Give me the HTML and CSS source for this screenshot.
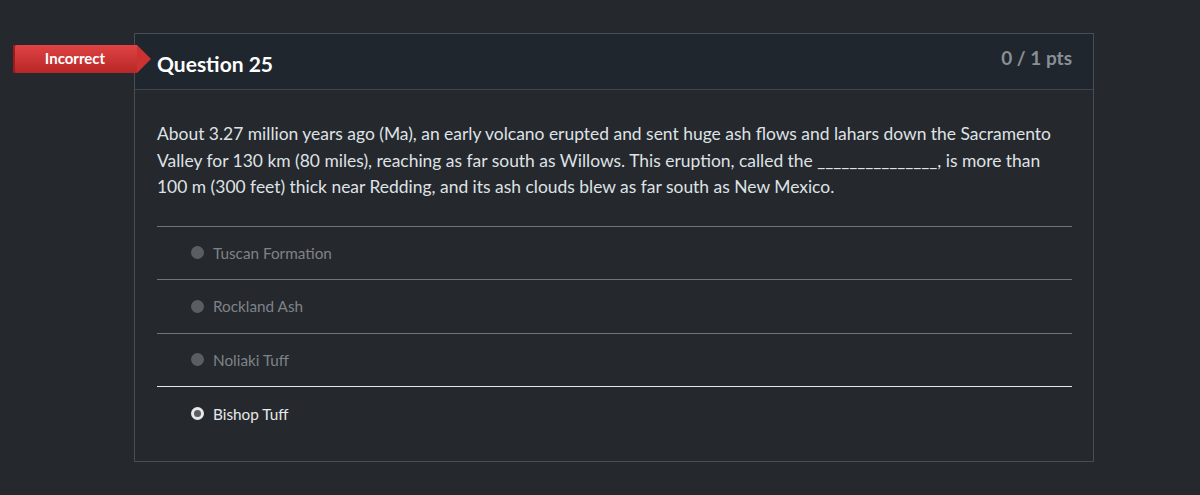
FILE: index.html
```html
<!DOCTYPE html>
<html>
<head>
<meta charset="utf-8">
<link rel="stylesheet" href="styles.css">
</head>
<body>
<div class="page">
  <div class="card">
    <div class="badge">Incorrect</div>
    <div class="header">
      <h2 class="title">Question 25</h2>
      <div class="pts">0 / 1 pts</div>
    </div>
    <div class="body">
      <p class="text">About 3.27 million years ago (Ma), an early volcano erupted and sent huge ash flows and lahars down the Sacramento Valley for 130 km (80 miles), reaching as far south as Willows. This eruption, called the _______________, is more than 100 m (300 feet) thick near Redding, and its ash clouds blew as far south as New Mexico.</p>
      <div class="answers">
        <div class="answer"><span class="radio"></span><span class="label">Tuscan Formation</span></div>
        <div class="answer"><span class="radio"></span><span class="label">Rockland Ash</span></div>
        <div class="answer"><span class="radio"></span><span class="label">Noliaki Tuff</span></div>
        <div class="answer selected"><span class="radio"></span><span class="label">Bishop Tuff</span></div>
      </div>
    </div>
  </div>
</div>
</body>
</html>
```
FILE: styles.css
```css
html, body {
  margin: 0;
  padding: 0;
  background: #25282d;
  font-family: Lato, "Liberation Sans", sans-serif;
  color: #dfe2e5;
}
.page {
  padding: 33px 106px 0 134px;
}
.card {
  position: relative;
  width: 960px;
  border: 1px solid #494e56;
  box-sizing: border-box;
  height: 429px;
}
.badge {
  position: absolute;
  left: -122px;
  top: 11px;
  width: 124px;
  height: 28px;
  background: linear-gradient(#e04343, #b72727);
  color: #fff;
  font-weight: 700;
  font-size: 15px;
  line-height: 26px;
  text-align: center;
  border-radius: 2px 0 0 2px;
  box-shadow: inset 2px 0 0 #9a1c1c;
}
.badge::after {
  content: "";
  position: absolute;
  right: -14px;
  top: 0;
  border-top: 14px solid transparent;
  border-bottom: 14px solid transparent;
  border-left: 14px solid #cc3232;
}
.header {
  height: 55px;
  background: #1f262d;
  border-bottom: 1px solid #3f454d;
  display: flex;
  justify-content: space-between;
  align-items: flex-start;
  padding: 0 21px 0 22px;
}
.title {
  margin: 16px 0 0;
  font-size: 21px;
  font-weight: 700;
  color: #ffffff;
  line-height: 27px;
}
.pts {
  margin-top: 12px;
  font-size: 19px;
  font-weight: 700;
  color: #8a8f95;
  line-height: 24px;
}
.body {
  padding: 31px 21px 0 22px;
}
.text {
  margin: 0;
  font-size: 17.45px;
  line-height: 26.5px;
  color: #dfe2e5;
}
.answers {
  margin-top: 25px;
  border-top: 1px solid #6f747a;
}
.answer {
  height: 52px;
  display: flex;
  align-items: center;
  border-bottom: 1px solid #6f747a;
  padding-left: 34px;
}
.answer:nth-child(2) {
  height: 53px;
}
.answer:nth-child(3) {
  border-bottom-color: #e6e8ea;
}
.answer:last-child {
  border-bottom: none;
  height: 54px;
}
.radio {
  width: 13px;
  height: 13px;
  border-radius: 50%;
  background: #5a5e63;
  box-sizing: border-box;
  margin-right: 9px;
}
.label {
  font-size: 15.3px;
  color: #7f8389;
}
.selected .radio {
  background: #5a5e63;
  border: 3px solid #e6e8ea;
}
.selected .label {
  color: #e6e8ea;
}
```
